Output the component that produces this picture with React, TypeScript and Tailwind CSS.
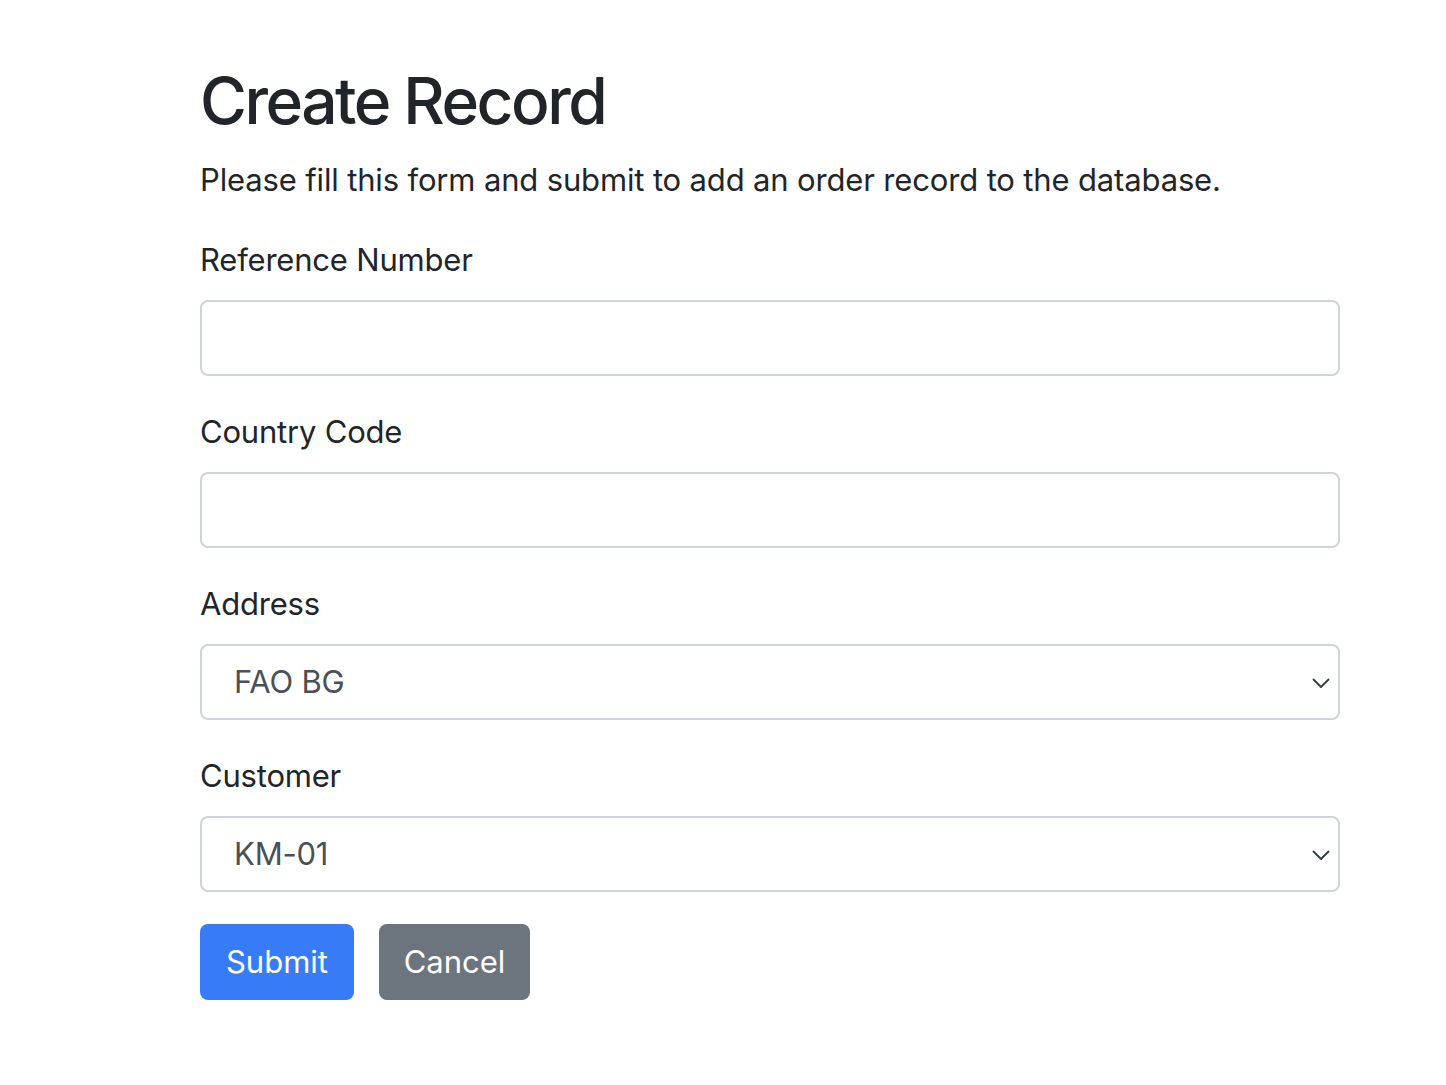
const font = { fontFamily: "Inter, 'Noto Sans', sans-serif" };

function Field({ label, children }: { label: string; children: React.ReactNode }) {
  return (
    <div className="mb-[32px]">
      <label className="mb-[16px] block h-[48px] text-[31px] leading-[48px] tracking-[-0.2px] text-[#212529]">{label}</label>
      {children}
    </div>
  );
}

function TextInput() {
  return (
    <input
      type="text"
      className="block h-[76px] w-full rounded-[8px] border-2 border-[#ced4da] bg-white px-[24px] text-[31px] text-[#495057] outline-none"
    />
  );
}

function SelectBox({ value }: { value: string }) {
  return (
    <div className="flex h-[76px] w-full items-center justify-between rounded-[8px] border-2 border-[#ced4da] bg-white pl-[32px] pr-[8px]">
      <span className="text-[31px] tracking-[-0.2px] text-[#495057]">{value}</span>
      <svg width="18" height="10" viewBox="0 0 18 10" fill="none" className="mt-[2px]">
        <path d="M1.5 1.5l7.5 7.5 7.5-7.5" stroke="#343a40" strokeWidth="1.8" strokeLinecap="round" strokeLinejoin="round" />
      </svg>
    </div>
  );
}

export default function App() {
  return (
    <div className="min-h-[1085px] bg-white" style={font}>
      <div className="ml-[200px] w-[1140px] pt-[62px]">
        <h1 className="mb-[16px] text-[64px] font-medium leading-[78px] tracking-[-2.5px] text-[#212529]">Create Record</h1>
        <p className="mb-[32px] text-[31px] leading-[48px] tracking-[-0.15px] text-[#212529]">
          Please fill this form and submit to add an order record to the database.
        </p>
        <Field label="Reference Number">
          <TextInput />
        </Field>
        <Field label="Country Code">
          <TextInput />
        </Field>
        <Field label="Address">
          <SelectBox value="FAO BG" />
        </Field>
        <Field label="Customer">
          <SelectBox value="KM-01" />
        </Field>
        <div className="flex gap-[25px]">
          <button className="h-[76px] w-[154px] rounded-[8px] bg-[#377cf6] text-[31px] text-white">Submit</button>
          <button className="h-[76px] w-[151px] rounded-[8px] bg-[#6c757d] text-[31px] text-white">Cancel</button>
        </div>
      </div>
    </div>
  );
}
